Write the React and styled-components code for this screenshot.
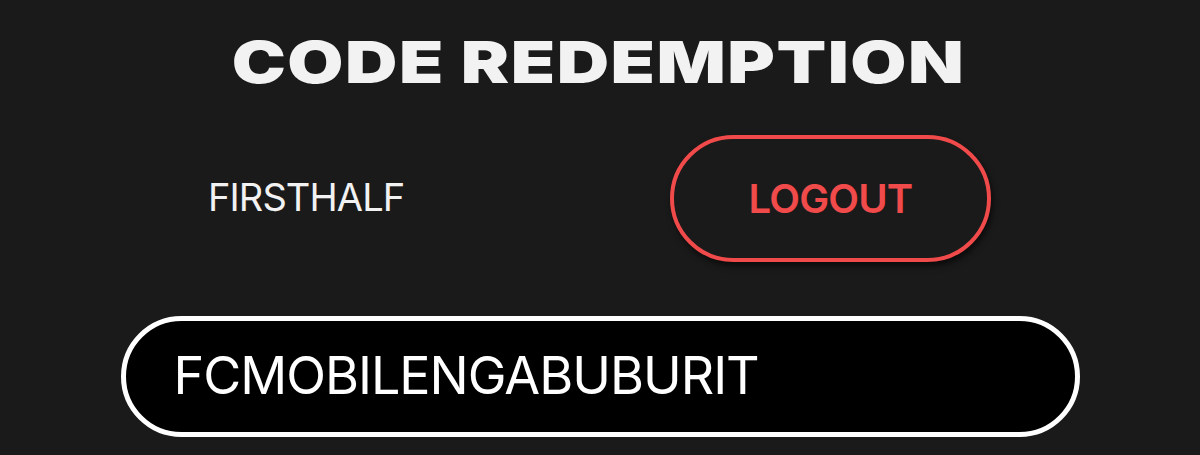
import styled, { createGlobalStyle } from "styled-components";

const GlobalStyle = createGlobalStyle`
  html, body {
    margin: 0;
    padding: 0;
    background: #1a1a1a;
  }
  body {
    font-family: Inter, "Liberation Sans", sans-serif;
  }
`;

export default function App() {
  return (
    <>
      <GlobalStyle />
      <Page>
        <Title>CODE REDEMPTION</Title>
        <UserRow>
          <UserName>FIRSTHALF</UserName>
          <LogoutButton>LOGOUT</LogoutButton>
        </UserRow>
        <CodeField>
          <CodeText>FCMOBILENGABUBURIT</CodeText>
        </CodeField>
      </Page>
    </>
  );
}

const Page = styled.div`
  width: 1200px;
  height: 455px;
  overflow: hidden;
  display: flex;
  flex-direction: column;
  align-items: center;
  padding-top: 34px;
  box-sizing: border-box;
`;

const Title = styled.h1`
  margin: 0;
  font-family: Inter, "Liberation Sans", sans-serif;
  font-weight: 900;
  font-size: 58px;
  line-height: 56px;
  color: #f2f2f2;
  letter-spacing: 1.2px;
  transform: scaleX(1.25);
  transform-origin: center;
  margin-left: -3px;
`;

const UserRow = styled.div`
  width: 781px;
  margin-top: 45px;
  display: flex;
  justify-content: space-between;
  align-items: center;
  margin-left: 1px;
`;

const UserName = styled.span`
  font-size: 38px;
  font-weight: 400;
  color: #f2f2f2;
  letter-spacing: -0.9px;
  margin-left: -2px;
  margin-top: -4px;
`;

const LogoutButton = styled.button`
  width: 321px;
  height: 127px;
  border: 4.5px solid #f04a4a;
  border-radius: 64px;
  background: #1a1a1a;
  color: #f04a4a;
  font-family: Inter, "Liberation Sans", sans-serif;
  font-size: 40px;
  font-weight: 600;
  letter-spacing: -0.8px;
  box-shadow: 2px 4px 6px rgba(0, 0, 0, 0.6);
  cursor: pointer;
`;

const CodeField = styled.div`
  width: 959px;
  height: 121px;
  box-sizing: border-box;
  margin-top: 54px;
  border: 5px solid #ffffff;
  border-radius: 61px;
  background: #000000;
  display: flex;
  align-items: center;
  padding-left: 48px;
`;

const CodeText = styled.span`
  font-size: 52px;
  font-weight: 400;
  color: #ffffff;
  letter-spacing: -1px;
  margin-top: -3px;
`;
